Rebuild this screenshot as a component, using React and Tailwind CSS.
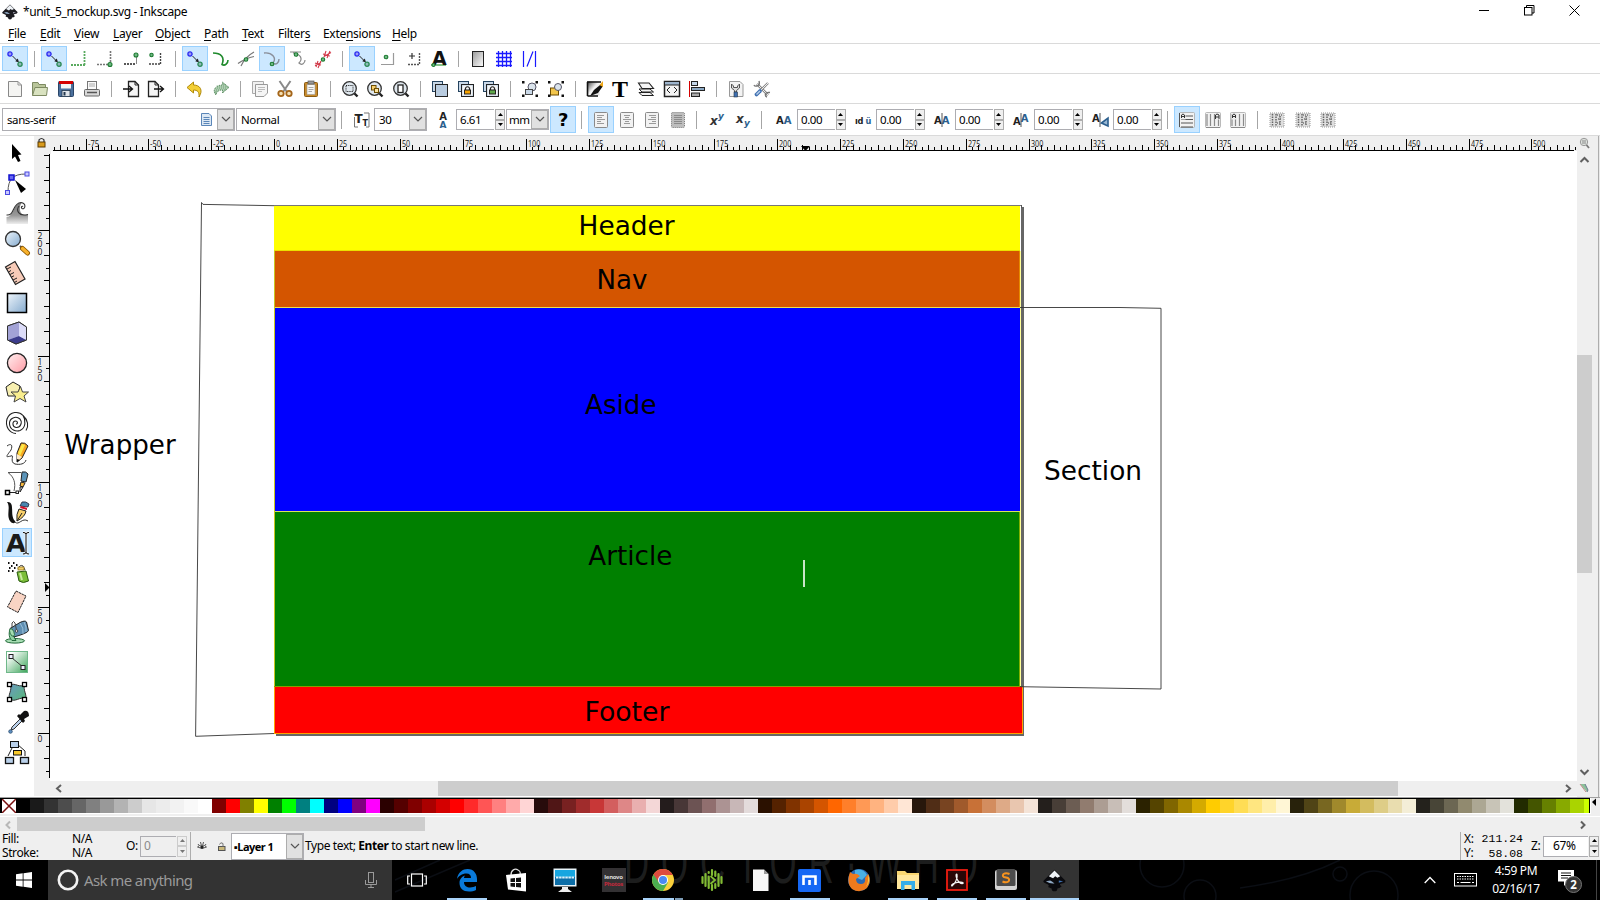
import React from "react";

/* ---------- shared helpers ---------- */

const Ic = ({ s = 24, className = "", children }) => (
  <svg width={s} height={s} viewBox={`${-s / 2} ${-s / 2} ${s} ${s}`} className={`shrink-0 overflow-visible ${className}`} fill="none" stroke="#222" strokeWidth="1">
    {children}
  </svg>
);

const Cell = ({ on, children }) => (
  <div className="flex w-[25.67px] shrink-0 items-center justify-center">
    {on ? (
      <div className="flex h-[25px] w-[26px] shrink-0 items-center justify-center border border-[#99d1ff] bg-[#cce8ff]">{children}</div>
    ) : (
      children
    )}
  </div>
);

const Sep = () => (
  <div className="flex w-[13.2px] shrink-0 items-center justify-center">
    <div className="h-4 w-px bg-[#a5a5a5]" />
  </div>
);

const Green = ({ x, y, r = 1.8 }) => <circle cx={x} cy={y} r={r} fill="#6fb884" stroke="#1c7a30" strokeWidth="1.1" />;

/* ---------- snap bar icons ---------- */

const SnapMain = () => (
  <Ic>
    <circle cx="-5" cy="-5" r="2.1" fill="#9a9af5" stroke="#2a2af0" strokeWidth="1.3" />
    <path d="M-2.5 -3 L2.5 2" />
    <path d="M4 3.6 L0.3 2.2 L2.8 -0.4 Z" fill="#222" stroke="none" />
    <circle cx="5" cy="5.2" r="2.1" fill="#8fb8b8" stroke="#2a8a55" strokeWidth="1.3" />
  </Ic>
);

const snapIcons = {
  main: <SnapMain />,
  edge: <Ic><path d="M5.5 -8 V6 M-8 6 H6" stroke="#5aab60" strokeWidth="1.8" strokeDasharray="2 1" /></Ic>,
  corner: <Ic><path d="M5.5 -8 V4 M-8 5.500 H3" stroke="#777" strokeDasharray="2 1" strokeWidth="1.6" /><Green x={5} y={5.5} r={2} /></Ic>,
  edgeMid: <Ic><path d="M5.500 -2 V5" stroke="#888" /><path d="M-7 5 H5" stroke="#222" strokeWidth="1.500" strokeDasharray="2 1" /><Green x={5} y={-4} r={2} /></Ic>,
  center: <Ic><path d="M4.500 -6 V5 M-7 5 H5" stroke="#444" strokeWidth="1.400" strokeDasharray="2 1" /><Green x={-4.500} y={-4} r={1.700} /></Ic>,
  path: <Ic><path d="M-8 -6 C0 -6 4 -2 1 5.500 C4 7.500 7 4 7 1" stroke="#1f8a2c" strokeWidth="1.600" /></Ic>,
  cross: <Ic><path d="M-8 4.500 Q0 -1 8 -2.500 M-5 7 Q-1 -2 8 -7" stroke="#777" strokeWidth="1.200" /><Green x={0} y={0.500} /></Ic>,
  cusp: <Ic><path d="M-8 -6 C0 -7 5 -1 1 4 C4 6.500 7 4 7 0" stroke="#8a8f9a" strokeWidth="1.400" /><Green x={0} y={5} /></Ic>,
  smooth: <Ic><path d="M-8 -7 H3 M-5 -6 C3 -5 5 0 1 4 C4 7 7 4 7 1" stroke="#888" strokeWidth="1.200" /><Green x={-2} y={-4.500} /></Ic>,
  mid: <Ic><path d="M-7 8 L-5 2 M-5 9 L-2 2 M-8 4 L-2 6 M1 -2 L3 -8 M4 -1 L7 -8 M0 -5 L7 -3 M-8 6.500 L-2 3.500 M1 -2.500 L8 -6.500" stroke="#d23a4a" strokeWidth="1.100" /><Green x={0} y={0.500} r={1.700} /></Ic>,
  objMid: <Ic><path d="M5.500 -6 V5.500 H-7" stroke="#9a9a9a" strokeWidth="1.200" /><Green x={-2} y={-2} /></Ic>,
  rot: <Ic><path d="M5.500 -6 V5.500 H-7" stroke="#555" strokeWidth="1.400" strokeDasharray="2 1" /><path d="M-5 -3 H1 M-2 -6 V0" stroke="#333" strokeWidth="1.200" /></Ic>,
  textA: <Ic><path d="M-8 6 H7" stroke="#5aab60" strokeWidth="1.500" /><text x="-7" y="6" className="font-['DejaVu_Sans'] text-[19px] font-bold" fill="#111" stroke="none">A</text><Green x={-5.500} y={6} r={1.500} /></Ic>,
  page: <Ic><defs><linearGradient id="pg" x1="0" x2="1" y1="0" y2="1"><stop offset="0" stopColor="#999" /><stop offset="1" stopColor="#fff" /></linearGradient></defs><rect x="-5.500" y="-7.500" width="11" height="15" fill="url(#pg)" stroke="#222" /></Ic>,
  grid: <Ic><path d="M-5.500 -8 V8 M-1.500 -8 V8 M2.500 -8 V8 M6.500 -8 V8 M-8 -5.500 H8 M-8 -1.500 H8 M-8 2.500 H8 M-8 6.500 H8" stroke="#1a1aff" strokeWidth="1.300" /></Ic>,
  guide: <Ic><path d="M-5.500 -8 V8 M6.500 -8 V8 M-2 7.500 L4 -7.500" stroke="#1a1aff" strokeWidth="1.200" /></Ic>,
};

const snapRow = ["*main", "|", "*main", "edge", "corner", "edgeMid", "center", "|", "*main", "path", "cross", "*cusp", "smooth", "mid", "|", "*main", "objMid", "rot", "textA", "|", "page", "grid", "guide"];

/* ---------- command bar icons ---------- */

const Lens = ({ children }) => (
  <Ic>
    <circle cx="-0.500" cy="-0.500" r="6.800" fill="#dfe7ee" stroke="#333" strokeWidth="1.300" />
    {children}
    <path d="M4.500 4.500 L7.500 7.500" strokeWidth="2.400" />
  </Ic>
);

const Stack = ({ lock }) => (
  <Ic>
    <rect x="-7.500" y="-7.500" width="10" height="10" fill="#c9d8e8" stroke="#24435f" />
    <rect x="-4.500" y="-4.500" width="12" height="12" fill="#b9cce0" stroke="#222" />
    {lock && (
      <g>
        <rect x="-3.500" y="-3.500" width="10" height="10" fill="#f6f6f6" stroke="none" />
        <path d="M-0.500 1 V-1 Q1.500 -3.500 3.500 -1 V1" stroke="#222" strokeWidth="1.200" />
        <rect x="-1.500" y="1" width="6" height="4" fill={lock} stroke="#222" />
      </g>
    )}
  </Ic>
);

const Handles = () => (
  <g fill="#111" stroke="none">
    <rect x="-8" y="-8" width="2.500" height="2.500" /><rect x="5.500" y="-8" width="2.500" height="2.500" />
    <rect x="-8" y="5.500" width="2.500" height="2.500" /><rect x="5.500" y="5.500" width="2.500" height="2.500" />
  </g>
);

const cmdIcons = {
  new: <Ic><path d="M-6.500 -7.500 H3 L6.500 -4 V7.500 H-6.500 Z" fill="#f4f4f2" stroke="#888" /><path d="M3 -7.500 V-4 H6.500" stroke="#999" /></Ic>,
  open: <Ic><path d="M-7.500 6.500 V-6.500 H-2 L-1 -4.500 H5.500 V-1" fill="#b9c59a" stroke="#7d8a62" /><path d="M-7.500 6.500 L-5 -1.500 H7.500 L6.500 6.500 Z" fill="#d9e2c0" stroke="#7d8a62" /></Ic>,
  save: <Ic><rect x="-7.500" y="-7.500" width="15" height="15" rx="1" fill="#4a6f9c" stroke="#2a4568" /><rect x="-5" y="-7" width="10" height="6.500" fill="#f4f4f4" stroke="none" /><rect x="-7" y="-8" width="14" height="3" fill="#d40000" stroke="none" /><rect x="-4" y="1.500" width="8" height="6" fill="#dfe4ea" stroke="#24384f" strokeWidth=".8" /><rect x="-2.500" y="3" width="2" height="3.500" fill="#24384f" stroke="none" /></Ic>,
  print: <Ic><rect x="-4.500" y="-7.500" width="9" height="8" fill="#fafafa" stroke="#777" /><path d="M-3 -5 H3 M-3 -3 H3" stroke="#aaa" /><rect x="-7.500" y="0.500" width="15" height="6.500" rx="1" fill="#d8d8d8" stroke="#666" /><path d="M-5 3.500 H5" stroke="#555" strokeWidth="1.500" /></Ic>,
  import: <Ic><path d="M-2.500 -7.500 H4 L7.500 -4 V7.500 H-2.500 Z" fill="#f4f4f4" strokeWidth="1.300" /><path d="M4 -7.500 V-4 H7.500" /><path d="M-8 0 H1 M-2 -3 L1.500 0 L-2 3" stroke="#111" strokeWidth="1.300" /></Ic>,
  export: <Ic><path d="M-7.500 -7.500 H-1 L2.500 -4 V7.500 H-7.500 Z" fill="#f4f4f4" strokeWidth="1.300" /><path d="M-1 -7.500 V-4 H2.500" /><path d="M-2 0 H7 M4 -3 L7.500 0 L4 3" stroke="#111" strokeWidth="1.300" /></Ic>,
  undo: <Ic><path d="M-8 -1.500 L-1.500 -7 V-4 C5 -4 8.500 1 4 8 C4.500 3 2.500 1 -1.500 1 V4 Z" fill="#f3cf35" stroke="#b08a0c" /></Ic>,
  redo: <Ic><path d="M8 -1.500 L1.500 -7 V-4 C-5 -4 -9.500 1 -5 6 C-4.500 3 -2.500 1 1.500 1 V4 Z" fill="#8fb894" stroke="#578a5e" strokeDasharray="1 1" /><path d="M-5 -1 H6 M-5 -3 H5 M-6 1 H4" stroke="#cfe2d0" strokeDasharray="1 1" /></Ic>,
  copy: <Ic><path d="M-7.500 -7.500 H3.500 V4.500 H-7.500 Z" fill="#f1f1f1" stroke="#aaa" /><path d="M-4.500 -4.500 H7.500 V4 L4 7.500 H-4.500 Z" fill="#f5f5f5" stroke="#999" /><path d="M-2 -1.500 H5 M-2 0.500 H5 M-2 2.500 H2" stroke="#bbb" /></Ic>,
  cut: <Ic><path d="M-5.500 -8 L2 3 M5.500 -8 L-2 3" stroke="#8a8a8a" strokeWidth="2" /><circle cx="-4" cy="4.500" r="2.700" fill="#f3dfb4" stroke="#a4651a" strokeWidth="1.800" /><circle cx="4" cy="4.500" r="2.700" fill="#f3dfb4" stroke="#a4651a" strokeWidth="1.800" /></Ic>,
  paste: <Ic><rect x="-6.500" y="-6.500" width="13" height="14" rx="1" fill="#c98b2a" stroke="#8a5a12" /><rect x="-4" y="-4.500" width="8" height="10" fill="#f7f7f4" stroke="#999" strokeWidth=".6" /><rect x="-3" y="-8" width="6" height="3" fill="#999" stroke="#555" strokeWidth=".7" /><path d="M-2.500 -1.500 H2.500 M-2.500 .5 H2.500 M-2.500 2.500 H1" stroke="#aaa" /></Ic>,
  zsel: <Lens><rect x="-4" y="-3.500" width="7" height="6" strokeDasharray="1.200 1" /></Lens>,
  zdraw: <Lens><rect x="-3.500" y="-3.500" width="4.500" height="4.500" fill="#f7cf6a" stroke="#6b4b00" /><rect x="-0.500" y="-0.500" width="4" height="4" fill="#fae3a0" stroke="#6b4b00" /></Lens>,
  zpage: <Lens><rect x="-3" y="-4" width="5" height="7.500" fill="#fff" strokeWidth="1.300" /></Lens>,
  dup: <Stack />,
  clone: <Stack lock="#f5a200" />,
  unclone: <Stack lock="#5fa84a" />,
  group: <Ic><circle cx="2" cy="-2" r="4" fill="#dbe4ec" stroke="#556" /><rect x="-4.500" y="0.500" width="7" height="5" fill="#c9d8e8" stroke="#444" /><Handles /></Ic>,
  ungroup: <Ic><rect x="-5.500" y="-1" width="8" height="7" fill="#f3c64c" stroke="#6b4b00" /><circle cx="2" cy="-2" r="3.500" fill="#dbe4ec" stroke="#556" /><Handles /></Ic>,
  fill: <Ic><defs><linearGradient id="fl" x1="0" x2="1" y1="0" y2="1"><stop offset="0" stopColor="#333" /><stop offset=".2" stopColor="#888" /><stop offset=".5" stopColor="#f4f4f4" /><stop offset="1" stopColor="#ddd" /></linearGradient></defs><rect x="-7.500" y="-7.500" width="12" height="14" fill="url(#fl)" stroke="none" /><path d="M-8 -7 H6 M-7.500 7 H3 M-7.500 -7 V7" stroke="#111" strokeWidth="1.600" /><path d="M7.500 -6 L-1 1 L-5 7 L3 4 L8 -3 Z" fill="#111" stroke="none" /><path d="M8 -8 L4.500 -4 L8 -2 Z" fill="#f0a818" stroke="none" /></Ic>,
  text: <Ic><text x="-8" y="7.500" className="font-['Liberation_Serif'] text-[23px] font-bold" textLength="16" lengthAdjust="spacingAndGlyphs" fill="#000" stroke="none">T</text></Ic>,
  layers: <Ic><path d="M-7 3.500 L-4 6.500 H7.500 L4 3.500 Z" fill="#f2f2f2" /><path d="M-7 0 L-4 3 H7.500 L4 0 Z" fill="#f2f2f2" /><path d="M-7.500 -6 H3 L7.500 -0.500 H-4 Z" fill="#f6f6f6" strokeWidth="1.100" /></Ic>,
  xml: <Ic><rect x="-7.500" y="-7.500" width="15" height="15" fill="#f4f4f4" strokeWidth="1.500" /><rect x="-7" y="-7" width="14" height="3" fill="#9db4cc" stroke="none" /><path d="M-7 -4 H7" /><path d="M-2 -2 L-5 1 L-2 4 M2 -2 L5 1 L2 4" /></Ic>,
  align: <Ic><path d="M-7.500 -8 V8" stroke="#d40000" /><rect x="-5.500" y="-7.500" width="6" height="4" fill="#c4d6e8" /><rect x="-5.500" y="-1.500" width="13" height="3" fill="#8aa8c4" /><rect x="-5.500" y="4" width="8" height="3.500" fill="#aaa" /></Ic>,
  prefs: <Ic><path d="M-6.500 -7.500 H4 L7 -4.500 V7.500 H-6.500 Z" fill="#f3f3f3" stroke="#999" /><path d="M-4.500 -5 V-1 L-1.500 1.500 V3 H.5 V1.500 L3.500 -1 V-5 L1.500 -3 V-1.500 H-2.500 V-3 Z" fill="#ddd" stroke="#555" /><rect x="-2" y="3" width="3.500" height="5" fill="#3f6fb0" stroke="#234" strokeWidth=".6" /></Ic>,
  tools: <Ic><path d="M-5 -5 L6 6" stroke="#888" strokeWidth="2.600" /><path d="M-5 -5 L6 6" stroke="#eee" strokeWidth="1" /><path d="M6 -6 L-1 1" stroke="#888" strokeWidth="2.400" /><path d="M6 -6 L-1 1" stroke="#eee" strokeWidth="1" /><path d="M-2 2 L-5.500 5.500" stroke="#3f6fb0" strokeWidth="3.800" strokeLinecap="round" /><path d="M-2 2 L-5.500 5.500" stroke="#b8cfea" strokeWidth="1.400" /><path d="M-3 -8 Q-2 -4 -4 -3.500 Q-7 -2 -8 -4 M8 3.500 Q4 3 3.500 5 Q3 7.500 5 8" stroke="#777" strokeWidth="1.400" /></Ic>,
};

const cmdRow = ["new", "open", "save", "print", "|", "import", "export", "|", "undo", "redo", "|", "copy", "cut", "paste", "|", "zsel", "zdraw", "zpage", "|", "dup", "clone", "unclone", "|", "group", "ungroup", "|", "fill", "text", "layers", "xml", "align", "|", "prefs", "tools"];

const IconRow = ({ items, icons }) =>
  items.map((n, i) =>
    n === "|" ? <Sep key={i} /> : <Cell key={i} on={n[0] === "*"}>{icons[n.replace("*", "")]}</Cell>
  );

/* ---------- text tool controls ---------- */

const Chevron = () => (
  <svg width="10" height="7" viewBox="0 0 10 7" fill="none" stroke="#555" strokeWidth="1.200"><path d="M1 1 L5 5 L9 1" /></svg>
);

const Combo = ({ className, children }) => (
  <div className={`flex shrink-0 border border-[#adadb2] bg-white ${className}`}>
    <div className="flex min-w-0 flex-1 items-center justify-between whitespace-nowrap">{children}</div>
    <div className="flex w-[17px] shrink-0 items-center justify-center border border-[#adadad] bg-[#e1e1e1]"><Chevron /></div>
  </div>
);

const Arrows = ({ dim }) => (
  <div className="flex h-[21px] w-[10px] shrink-0 flex-col">
    {["M1 4 L3.500 1 L6 4 Z", "M1 1 L3.500 4 L6 1 Z"].map((d) => (
      <div key={d} className={`flex flex-1 items-center justify-center border bg-[#efefef] ${dim ? "border-[#ccc]" : "border-[#adadad]"}`}>
        <svg width="7" height="5" fill={dim ? "#777" : "#000"}><path d={d} /></svg>
      </div>
    ))}
  </div>
);

const Spin = ({ className, children, dim }) => (
  <div className={`flex shrink-0 items-center gap-px ${className}`}>
    <div className={`flex h-[21px] flex-1 items-center border border-r-0 border-[#adadb2] pl-[3px] ${dim ? "bg-[#efefef] text-[#8a8a8a]" : "bg-white"}`}>{children}</div>
    <Arrows dim={dim} />
  </div>
);

const AlignIcon = ({ rows, dim }) => (
  <Ic>
    <rect x="-6.500" y="-7.500" width="13" height="15" rx="1" fill={dim ? "#bdbdbd" : "#f2f2f2"} stroke={dim ? "#777" : "#8a8a8a"} strokeDasharray={dim ? "1 1" : "none"} />
    {rows.map(([a, b], i) => <path key={i} d={`M${a} ${-4.500 + i * 2} H${b}`} stroke={dim ? "#8a8a8a" : "#9a9a9a"} />)}
  </Ic>
);

const FlowIcon = ({ v, right }) => (
  <Ic>
    <rect x="-7.500" y="-7.500" width="15" height="15" rx="1" fill="#f2f2f2" stroke="#aaa" strokeWidth=".8" />
    {v ? <path d="M-6 -6 V6 M-2.500 -6 V6 M1.500 -6 V6 M5.500 -6 V6 M-7 7.500 H7" stroke="#8a8a8a" strokeWidth="1.200" /> : <path d="M-2 -4 H6 M-6 -.5 H6 M-6 3 H6 M-6 7 H6 M-7.500 -7 V7" stroke="#555" strokeWidth="1" />}
    <rect x={right ? 2 : -6.500} y="-6.500" width="5" height="6" fill="#eee" stroke="none" />
    <path d={right ? "M2.500 -1 V-5 L4 -6 L6 -5 V-1 M2.500 -3 H6" : "M-5.500 -2 V-5 L-4 -6 L-2.500 -5 V-2 M-5 -3.500 H-2.500"} stroke="#333" strokeWidth="1" />
  </Ic>
);

const GrayIcon = () => (
  <Ic>
    <rect x="-7" y="-7" width="14" height="14" fill="#dedede" stroke="#999" strokeDasharray="1 1" />
    <path d="M-4.500 -6 V6 M-1 -6 V6 M3 -4 V6" stroke="#666" strokeWidth="1.500" strokeDasharray="1.500 1" />
    <path d="M0 -5 H6 M1 -1 H5 M0 3 H4" stroke="#777" strokeDasharray="1 1" strokeWidth="1.500" />
  </Ic>
);

const AA = "font-['DejaVu_Sans'] font-bold";

/* ---------- toolbox ---------- */

const tools = [
  ["select", <><path d="M-5 -9 V6 L-2 3.500 L1 9 L3.500 8 L1 2 L4.500 1.500 Z" fill="#000" stroke="none" /></>],
  ["node", <><path d="M-9 9 C-9 -4 -4 -9 9 -9" stroke="#555" /><rect x="-8" y="-8" width="5" height="5" fill="#6a6af0" stroke="#1010d0" strokeWidth="1.500" /><rect x="8" y="-11" width="4" height="4" fill="#c9c9ff" stroke="#4a4ae0" /><rect x="-11.500" y="7.500" width="4" height="4" fill="#c9c9ff" stroke="#4a4ae0" /><path d="M-2 -3 L9 6 L4 10 Z" fill="#000" stroke="none" /></>],
  ["tweak", <><path d="M-10.500 11 V4 C-3 4 -4 -10 5 -10.500 C2 -8 1 4 11 1.500 V11 Z" fill="url(#tw)" stroke="none" /><path d="M-10.500 2 C-2 3 -5 -10 4 -10.500 C10 -9.500 8 -3 5 -4.500 C3.500 -6 5 -7.500 6 -6.500 M2 -7 C-1 -3 1 4 11 1.500" stroke="#333" strokeWidth="1.100" /></>],
  ["zoom", <><path d="M3 3 L6 6" stroke="#555" strokeWidth="2" /><path d="M5.500 5.500 L10.500 10" stroke="#8a5600" strokeWidth="5" strokeLinecap="round" /><path d="M5.500 5.500 L10.500 10" stroke="#f7b12c" strokeWidth="3.200" strokeLinecap="round" /><circle cx="-4" cy="-4" r="7.500" fill="url(#bl)" stroke="#333" strokeWidth="1.300" /></>],
  ["measure", <><path d="M-11.500 -6 L-2 -11.500 L8 6 L-1.500 11.500 Z" fill="#f7cbb8" strokeWidth="1.200" /><path d="M-10 -4 L-6 -6 M-8.500 -1 L-6 -2.500 M-7 1.500 L-3 -.5 M-5.500 4 L-3 2.800 M-4 7 L0 5 M-2.500 9.500 L0 8" /></>],
  ["rect", <rect x="-9.500" y="-9.500" width="19" height="19" fill="url(#bl)" strokeWidth="1.500" stroke="#000" />],
  ["box", <><path d="M-9.500 -7 L2 -11 L9.500 -6 V7 L-1 11 L-9.500 7 Z" fill="#c9c9ee" stroke="#222" /><path d="M-9 -7 L2 -11 V3 L-9 7 Z" fill="#a3a3d6" stroke="none" /><path d="M2 3 L-9 7 L-1 11 L9 7 Z" fill="#3c3c8c" stroke="none" /><path d="M2 -10.500 L9 -6 V6.500 L2 3 Z" fill="#dcdcf8" stroke="none" /><path d="M-9.500 -7 L2 -11 L9.500 -6 V7 L-1 11 L-9.500 7 Z" stroke="#333" /></>],
  ["ellipse", <circle r="9.600" fill="url(#pk)" strokeWidth="1.300" />],
  ["star", <><path d="M-11 -6 L-4 -11 L3 -7 L1 3 L-9 3 Z" fill="#f7efb0" /><path d="M3.500 -6.500 L5.500 -1 L11.500 -1 L7 3 L9 9 L3 5.500 L-3 9 L-1.500 3 L-6 -1 H1 Z" fill="#f9ee8e" stroke="#444" /></>],
  ["spiral", <path d="M-1 1 C1 1 1 -2 -1.500 -2 C-5 -2 -5 4 -1 4.500 C4 5 5.500 -1 3 -4 C-1 -7.500 -8 -5 -7.500 1 C-7 7 -1 9 3 7.500 C9 5 9 -3 6 -7.500 C2 -12 -7 -12 -10 -4 C-12 3 -8 10 -1 10.500 M6 -7.500 C11 -3 12 3 9 7.500" stroke="#222" strokeWidth="1.100" />],
  ["pencil", <><path d="M-10 -7 C-6 -10 -4 -8 -6 -3 C-12 5 -11 4 -6 3 C-2 1 -8 9 -2 11 C3 12 8 11 9 7" stroke="#333" /><path d="M0 0 L4 -10 Q8 -11 11 -7 L5 5 L0 9 Z" fill="#f7a822" stroke="#222" /><path d="M1 0 L5 -9 L8 -8 L3 3 Z" fill="#fbe94a" stroke="none" /><path d="M0 1 L5 4 L0 9 Z" fill="#fbe9c8" stroke="none" /><path d="M0 6 L3 7 L0 9.500 Z" fill="#111" stroke="none" /></>],
  ["bezier", <><path d="M-9 -10.500 H4 M-9 -10.500 C-3 -6 -1 0 -3 8" stroke="#555" /><path d="M-9 9.500 H-1" /><rect x="-11.500" y="7.500" width="4" height="4" fill="#fff" strokeWidth="1.500" stroke="#000" /><rect x="-1" y="8" width="2.500" height="2.500" fill="#fff" /><path d="M5 -11 Q9 -12 11 -9 L9 -1 L4 -2 Z" fill="#5a93b8" stroke="#222" /><path d="M4 -1 L8 0 L6 4 L3 3 Z" fill="#f7b83c" /><path d="M3 4 L6 4 L3 9 Z" fill="#ddd" /></>],
  ["calli", <><path d="M-10 -11 C-1 -12 -8 2 -2 8 C-1 11 -5 11 -7 8 C-11 2 -6 -6 -10 -11 Z" fill="#111" stroke="none" /><path d="M-2 9 C2 13 5 4 11 8" stroke="#333" /><path d="M5 -11 Q9 -12 12 -9 L11 -6 L3 -7 Z" fill="#4a86b0" stroke="#223" strokeWidth=".8" /><path d="M4 -7 L10 -5 V-3 L3 -5 Z" fill="#d4102a" stroke="none" /><path d="M2 -4 L9 -2 Q8 4 0 8 Q-1 1 2 -4 Z" fill="#f7cf6a" /><path d="M0 8 L5 0" stroke="#222" /></>],
  ["text", <><text x="-11" y="9" className="font-['DejaVu_Sans'] text-[25px] font-bold" textLength="20" lengthAdjust="spacingAndGlyphs" fill="#1a1a1a" stroke="none">A</text><path d="M9 -9 V10 M6 -10.500 Q9 -10.500 9 -9 Q9 -10.500 12 -10.500 M6 11 Q9 11 9 9.500 Q9 11 12 11" stroke="#fff" strokeWidth="2.500" /><path d="M9 -9 V10 M6 -10.500 Q9 -10.500 9 -9 Q9 -10.500 12 -10.500 M6 11 Q9 11 9 9.500 Q9 11 12 11" stroke="#000" strokeWidth="1" /></>],
  ["spray", <><path d="M-9 -9 h1.500 M-6 -6 h1.500 M-8 -4 h1.500 M-4 -9 h1.500 M-3 -4 h1.500 M-9 -1 h1.500 M-5 -1 h1.500 M-1 -7 h1.500" stroke="#111" strokeWidth="1.800" /><path d="M1 -3 Q3 -8 6 -6 L8 -2" fill="#eee" stroke="#333" /><rect x="1" y="-5" width="6" height="3" fill="#f3cf6a" stroke="#8a6a10" strokeWidth=".7" /><path d="M0 0 L9 -1 L11.500 9 Q6 12 2 9 Z" fill="#7cbf3a" stroke="#2a5a10" /><path d="M3 1 L5 8" stroke="#c9eaa0" strokeWidth="2" /></>],
  ["eraser", <path d="M-1 -11 L9 -6 L1 10.500 L-9.500 5 Z" fill="#f9d4c4" stroke="#222" strokeDasharray="2.500 .6" />],
  ["bucket", <><ellipse cx="-2" cy="8.800" rx="9.500" ry="2.300" fill="#a6dcb2" stroke="#226a3a" /><path d="M-7 -3 C-8.500 2 -8 6 -5 8.500 H-1 C-4 4 -3 3 -2 3" fill="#8fd0a0" stroke="#226a3a" /><path d="M-7 -3.500 L3 -9.500 Q8 -12 9.500 -10 L11.500 -1.500 Q11 1 -3 5 Z" fill="#5f8fb2" stroke="#222" /><path d="M3 -9 Q7 -4 6 2 M7 -10 Q10 -5 9 0" stroke="#9cc0da" /><ellipse cx="-5" cy="0.500" rx="2" ry="4" transform="rotate(-22 -5 .5)" fill="#a6dcb2" stroke="#226a3a" strokeWidth=".8" /><path d="M-5 -4 V-9 Q-3.500 -12 -2 -9 L-0.500 -2" stroke="#444" /><circle cx="-0.500" cy="-1" r="1.300" fill="#eee" stroke="#444" /></>],
  ["gradient", <><rect x="-10.500" y="-10.500" width="21" height="21" fill="url(#gr)" stroke="#6fb88a" /><path d="M-5 -4 L6 5" stroke="#333" /><rect x="-8" y="-7.500" width="4" height="4" fill="#eef" /><rect x="4" y="3.500" width="4" height="4" fill="#eef" /></>],
  ["mesh", <><path d="M-7 -7 C-2 -10 3 -3 8 -8 C5 -2 11 3 8 7 C3 4 -2 11 -7 7 C-10 3 -4 -2 -7 -7 Z" fill="url(#ms)" stroke="#333" />{[[-9.5, -9.5], [5.5, -9.5], [-9.5, 5.5], [5.5, 5.5]].map(([x, y]) => <rect key={`${x}${y}`} x={x} y={y} width="4" height="4" fill="#fff" stroke="#000" strokeWidth="1.300" />)}</>],
  ["dropper", <><path d="M4 -4 L-5 5 L-6 8 L-3 7 L6 -2" fill="#b9d0ea" stroke="#333" /><path d="M0 -6 L6 1 L8 -1 L7 -3 L12 -6 Q12 -12 7 -11 L3 -7 L2 -8 Z" fill="#111" stroke="none" /><circle cx="-6.500" cy="9.500" r="1.800" fill="#5f8fc0" stroke="#246" strokeWidth=".7" /></>],
  ["connector", <><path d="M-5 -4 L-9 4 M0 -8 L8 -1 V4" /><rect x="-6.500" y="-10.500" width="8" height="6" fill="#b9d0ea" stroke="#111" /><rect x="-3.500" y="-1.500" width="8" height="4.500" fill="#f7c82c" stroke="#111" /><rect x="-11.500" y="5.500" width="8" height="6" fill="#b9d0ea" stroke="#111" strokeWidth="1.300" /><rect x="3.500" y="5.500" width="8" height="6" fill="#b9d0ea" stroke="#111" strokeWidth="1.300" /></>],
];

const Defs = () => (
  <svg width="0" height="0" className="absolute">
    <defs>
      <linearGradient id="bl" x1="0" y1="0" x2="1" y2="1"><stop offset="0" stopColor="#eef5fb" /><stop offset="1" stopColor="#84aace" /></linearGradient>
      <linearGradient id="pk" x1="0" y1="0" x2="1" y2="1"><stop offset="0" stopColor="#fff0f0" /><stop offset="1" stopColor="#ff9aa4" /></linearGradient>
      <linearGradient id="tw" x1="0" y1="0" x2="0" y2="1"><stop offset="0" stopColor="#777" /><stop offset=".6" stopColor="#999" /><stop offset="1" stopColor="#eee" /></linearGradient>
      <linearGradient id="gr" x1="0" y1="0" x2="1" y2="1"><stop offset="0.150" stopColor="#fff" /><stop offset="1" stopColor="#3aa458" /></linearGradient>
      <linearGradient id="ms" x1="0" y1="0" x2="1" y2="1"><stop offset="0" stopColor="#6a9ac0" /><stop offset="1" stopColor="#58b878" /></linearGradient>
    </defs>
  </svg>
);

/* ---------- rulers ---------- */

const HRuler = () => {
  const ticks = [];
  for (let i = -35; i <= 207; i++) {
    const x = Math.round(274.2 + i * 6.286) - 34;
    if (x < 19 || x > 1542) continue;
    ticks.push([x, i]);
  }
  return (
    <svg width="1543" height="18" className="shrink-0 bg-[#efefef]">
      <rect x="17" y="15" width="1526" height="3" fill="#fff" />
      {ticks.map(([x, i]) => (
        <rect key={i} x={x} y={i % 10 === 0 ? 3 : i % 2 === 0 ? 9 : 11} width="1" height={i % 10 === 0 ? 11 : i % 2 === 0 ? 5 : 3} fill="#000" />
      ))}
      {ticks.filter(([, i]) => i % 10 === 0).map(([x, i]) => {
        const t = String(i * 2.5);
        return <text key={t} x={x + 2} y="11" textLength={t.replace("-", "").length * 4.1 + (t[0] === "-" ? 3 : 0)} lengthAdjust="spacingAndGlyphs" className="font-['Open_Sans'] text-[9px]" fill="#111">{t}</text>;
      })}
      <rect x="19" y="14" width="1521" height="1" fill="#000" />
      <path d="M767 10 H776 L771.500 15 Z" fill="#000" />
      <rect x="4" y="6" width="7" height="5" fill="#d89a1c" stroke="#5a3a00" />
      <path d="M5 6 V4 Q7.500 1 10 4 V6" fill="none" stroke="#333" strokeWidth="1.200" />
    </svg>
  );
};

const VRuler = () => {
  const ticks = [];
  for (let i = -3; i <= 46; i++) ticks.push([Math.round(733 - i * 12.57) - 154, i]);
  return (
    <svg width="17" height="642" className="shrink-0 bg-[#efefef]">
      {ticks.map(([y, i]) => (
        <rect key={i} x={i % 10 === 0 ? 4 : i % 2 === 0 ? 10 : 12} y={y} width={i % 10 === 0 ? 11 : i % 2 === 0 ? 5 : 3} height="1" fill="#000" />
      ))}
      {ticks.filter(([, i]) => i % 10 === 0).map(([y, i]) =>
        String(i * 5).split("").map((c, k) => (
          <text key={`${i}-${k}`} x="3.500" y={y + 8.500 + k * 8} className="font-['Open_Sans'] text-[8.500px]" fill="#111">{c}</text>
        ))
      )}
      <rect x="15" y="0" width="1" height="624" fill="#000" />
      <path d="M11 429 V438 L15.500 433.500 Z" fill="#000" />
      <rect x="16" y="0" width="1" height="627" fill="#fff" />
    </svg>
  );
};

/* ---------- drawing ---------- */

const labels = [
  ["Wrapper", 64.2, 454, 111.5],
  ["Header", 578.6, 235.2, 96],
  ["Nav", 596.4, 289.2, 51],
  ["Aside", 585, 413.7, 71.5],
  ["Article", 588.3, 564.7, 84],
  ["Footer", 584.5, 720.5, 85],
  ["Section", 1044, 480, 98],
];

const Drawing = () => (
  <svg width="1526" height="627" viewBox="51 154 1526 627" className="shrink-0 bg-white">
    <rect x="276" y="734" width="748" height="2" fill="#666" />
    <rect x="1021" y="207" width="3" height="529" fill="#666" />
    <rect x="274" y="205" width="748" height="1" fill="#777" />
    <rect x="1021" y="205" width="1" height="3" fill="#555" />
    <rect x="274" y="206" width="747" height="528" fill="#fff" />
    <rect x="1020" y="251" width="1" height="436" fill="#ffff9a" />
    <rect x="274" y="206" width="746" height="45" fill="#ff0" />
    <rect x="274" y="250.500" width="746" height=".5" fill="#d9c000" />
    <rect x="274" y="251" width="746" height="56" fill="#d45500" />
    <rect x="1019" y="251" width="1" height="56" fill="#e58a00" />
    <rect x="274" y="307" width="746" height="1" fill="#e8e050" />
    <rect x="274" y="308" width="746" height="203" fill="#00f" />
    <rect x="274" y="511" width="746" height="1" fill="#d8e060" />
    <rect x="274" y="512" width="746" height="174" fill="#008000" />
    <rect x="1019" y="512" width="1" height="174" fill="#7fb000" />
    <rect x="274" y="251" width="1" height="435" fill="#c8c820" />
    <rect x="274" y="686" width="748" height="1" fill="#8a9c00" />
    <rect x="274" y="687" width="749" height="47" fill="#ffa000" />
    <rect x="275" y="687" width="747" height="46" fill="#f00" />
    <path d="M274 205.700 L203 204.400 L201.500 202.500 L195.600 736.300 L274 733.500" fill="none" stroke="#333" strokeWidth=".9" />
    <path d="M1020 307.500 H1120 L1161 308.300 V689 L1020 686.700" fill="none" stroke="#333" strokeWidth=".9" />
    {labels.map(([t, x, y, w]) => (
      <text key={t} x={x} y={y} textLength={w} lengthAdjust="spacingAndGlyphs" className="font-['DejaVu_Sans',sans-serif] text-[26.500px]" fill="#000">{t}</text>
    ))}
    <rect x="803" y="560" width="2" height="27" fill="#c8e4c8" />
  </svg>
);

/* ---------- palette ---------- */

const palette = (
  "000000 1a1a1a 333333 4d4d4d 666666 808080 999999 b3b3b3 cccccc e6e6e6 ececec f2f2f2 f9f9f9 ffffff " +
  "800000 ff0000 808000 ffff00 008000 00ff00 008080 00ffff 000080 0000ff 800080 ff00ff " +
  "2b0000 550000 800000 aa0000 d40000 ff0000 ff2a2a ff5555 ff8080 ffaaaa ffd5d5 " +
  "280b0b 501616 782121 a02c2c c83737 d35f5f de8787 e9afaf f4d7d7 241c1c 483737 6c5353 916f6f ac9393 c8b7b7 e3dbdb " +
  "2b1100 552200 803300 aa4400 d45500 ff6600 ff7f2a ff9955 ffb380 ffccaa ffe6d5 " +
  "28170b 502d16 784421 a05a2c c87137 d38d5f deaa87 e9c6af f4e3d7 241f1c 483e37 6c5d53 917c6f ac9d93 c8beb7 e3dedb " +
  "2b2200 554400 806600 aa8800 d4aa00 ffcc00 ffd42a ffdd55 ffe680 ffeeaa fff6d5 " +
  "28220b 504416 786721 a0892c c8ab37 d3bc5f decd87 e9ddaf f4eed7 24221c 484537 6c6753 918a6f aca793 c8c4b7 e3e2db " +
  "222b00 445500 668000 88aa00 aad400 ccff00"
).split(" ");

/* ---------- taskbar ---------- */

const TaskCell = ({ line, active, wide, children }) => (
  <div className={`flex h-10 shrink-0 flex-col items-center ${wide ? "w-[49px]" : "w-[49px]"} ${active ? "bg-[#333]" : ""}`}>
    <div className="flex flex-1 items-center pt-0.5">{children}</div>
    <div className={`flex h-0.5 justify-end ${active ? "w-full" : "w-10"} ${line ? "bg-[#a9d3f9]" : ""}`}>
      {line === "multi" && <div className="h-0.5 w-[9px] border-l border-black bg-[#7e9db8]" />}
    </div>
  </div>
);

const InkLogo = ({ s = 16, dark }) => (
  <svg width={s} height={s} viewBox="0 0 16 16">
    <path d="M8 0.500 L15.500 8 Q16 10 13 10 Q10.500 10.500 13 12 Q12 13.500 10 13.500 Q10 15.500 8 15.500 Q6 15.500 6 13.500 L3.500 12.500 Q5 11 2 10 Q-.5 9.500 .5 8 Z" fill={dark ? "#0a0a0e" : "#1b1b20"} />
    <path d="M8 1 L12 5 L10 6 L8.500 5 L7 6.500 L4 5 Z" fill="#eef2f6" />
    <path d="M2 8.500 Q5 10.500 8 10 Q6 8.500 5 8 Z" fill="#8fa8c4" />
    <path d="M11 8 L14 8.500 L11 9.500 Z" fill={dark ? "#3f72b4" : "#99a"} />
  </svg>
);

const Chrome = () => (
  <svg width="24" height="24" viewBox="-12 -12 24 24">
    <circle r="11" fill="#fbd03b" />
    <path d="M0 0 L-9.500 -5.500 A11 11 0 0 0 0 11 L5 2.500 Z" fill="#4caf50" />
    <path d="M0 -11 A11 11 0 0 1 9.800 -5 H0 L-4 2.500 L-9.500 -5.500 A11 11 0 0 1 0 -11 Z" fill="#dd4b3e" />
    <circle r="5" fill="#fff" /><circle r="4" fill="#4a8af4" />
  </svg>
);

const Wallpaper = () => (
  <svg width="1600" height="40" className="absolute left-0 top-0">
    <text transform="translate(624 23) scale(.58 1)" textLength="610" className="font-['Liberation_Sans'] text-[60px]" fill="#1c1d1d">DOCTOR·WHO</text>
    <g fill="none" stroke="#0b0e14" strokeWidth="1.500">
      <circle cx="1162" cy="5" r="22" /><circle cx="1200" cy="36" r="16" /><circle cx="1374" cy="35" r="24" /><circle cx="1340" cy="14" r="7" />
      <path d="M395 20 L440 0 M395 32 L470 0 M1240 28 Q1300 20 1340 0" />
    </g>
  </svg>
);

export default function App() {
  const menus = [["", "F", "ile", "w-8"], ["", "E", "dit", "w-[34px]"], ["", "V", "iew", "w-[39px]"], ["", "L", "ayer", "w-[42px]"], ["", "O", "bject", "w-[49px]"], ["", "P", "ath", "w-[38px]"], ["", "T", "ext", "w-9"], ["Filter", "s", "", "w-[45px]"], ["Exte", "n", "sions", "w-[69px]"], ["", "H", "elp", "w-10"]];
  return (
    <div className="flex h-[900px] w-[1600px] flex-col overflow-hidden bg-white font-['Noto_Sans','Open_Sans',sans-serif] text-[12px] leading-none text-black">
      <Defs />

      {/* title bar */}
      <div className="flex h-6 shrink-0 items-center pl-[2px]">
        <InkLogo />
        <span className="ml-[5px] tracking-[-0.360px]">*unit_5_mockup.svg - Inkscape</span>
        <div className="ml-auto flex h-full items-start gap-[34px] pr-[20px] pt-[5px]">
          <svg width="11" height="11"><path d="M0 5.500 H10" stroke="#000" /></svg>
          <svg width="11" height="11" fill="none" stroke="#000"><rect x=".5" y="2.500" width="7.500" height="7.500" /><path d="M2.500 2.500 V.5 H10 V8 H8" /></svg>
          <svg width="11" height="11" stroke="#000"><path d="M.5 .5 L10.500 10.500 M10.500 .5 L.5 10.500" /></svg>
        </div>
      </div>

      {/* menu bar */}
      <div className="flex h-5 shrink-0 items-center border-b border-[#dadada] pl-2 tracking-[-0.300px]">
        {menus.map(([a, u, b, w]) => (
          <span key={a + u + b} className={`shrink-0 whitespace-nowrap ${w}`}>{a}<span className="underline underline-offset-2">{u}</span>{b}</span>
        ))}
      </div>

      {/* snap bar */}
      <div className="flex h-[30px] shrink-0 items-center border-b border-[#dadada] pl-[2px]"><IconRow items={snapRow} icons={snapIcons} /></div>

      {/* command bar */}
      <div className="flex h-[30px] shrink-0 items-center border-b border-[#dadada] pl-[2px]"><IconRow items={cmdRow} icons={cmdIcons} /></div>

      {/* text tool bar */}
      <div className="flex h-8 shrink-0 items-center border-b border-[#dadada] pl-[2px] text-[11.500px] tracking-[-0.400px]">
        <Combo className="h-[23px] w-[233px]">
          <span className="pl-1">sans-serif</span>
          <svg width="11" height="13" className="mr-[5px]" fill="none" stroke="#5a86b8"><path d="M.5 .5 H8 L10.500 3 V12.500 H.5 Z" fill="#dce8f4" /><path d="M2.500 4.500 H8.500 M2.500 6.500 H8.500 M2.500 8.500 H8.500 M2.500 10.500 H8.500" /></svg>
        </Combo>
        <Combo className="ml-px h-[23px] w-[100px]"><span className="pl-1">Normal</span></Combo>
        <div className="ml-[5px] h-[18px] w-px shrink-0 bg-[#a5a5a5]" />
        <Ic className="ml-[8px]">
          <path d="M-7.500 -3 V7 H-4 M2 -7 H7 V7 H4" stroke="#777" />
          <text x="-7.500" y="2.500" className={`${AA} text-[12px]`} fill="#222" stroke="none">T</text>
          <text x="0.500" y="6" className={`${AA} text-[8px]`} fill="#222" stroke="none">T</text>
        </Ic>
        <Combo className="h-[23px] w-[53px]"><span className="pl-1">30</span></Combo>
        <Ic className="ml-[4px]">
          <text x="-3.800" y="-0.500" className={`${AA} text-[10px]`} fill="#222" stroke="none">A</text>
          <text x="-3.400" y="7.500" className={`${AA} text-[9px]`} fill="#2c5f8e" stroke="none">A</text>
        </Ic>
        <Spin className="ml-px w-[49px]">6.61</Spin>
        <Combo className="ml-[1px] h-[21px] w-[43px]"><span className="pl-[2px]">mm</span></Combo>
        <div className="ml-px flex h-[27px] w-[26px] shrink-0 items-center justify-center border border-[#99d1ff] bg-[#cce8ff]">
          <span className="font-['DejaVu_Sans'] text-[18px] font-bold">?</span>
        </div>
        <div className="ml-[5px] h-[18px] w-px shrink-0 bg-[#a5a5a5]" />
        <div className="ml-[6px] flex h-[27px] w-[26px] shrink-0 items-center justify-center border border-[#99d1ff] bg-[#cce8ff]">
          <AlignIcon rows={[[-4, 3], [-4, 1], [-4, 4], [-4, 0], [-4, 3]]} />
        </div>
        <Cell><AlignIcon rows={[[-3, 3], [-2, 2], [-4, 4], [-2, 2], [-3, 3]]} /></Cell>
        <Cell><AlignIcon rows={[[-3, 4], [-1, 4], [-4, 4], [0, 4], [-3, 4]]} /></Cell>
        <Cell><AlignIcon dim rows={[[-4, 4], [-4, 4], [-4, 4], [-4, 4], [-4, 4]]} /></Cell>
        <div className="ml-[5px] h-[18px] w-px shrink-0 bg-[#a5a5a5]" />
        <Ic className="ml-[8px]">
          <text x="-7" y="5" className={`${AA} text-[12px] italic`} fill="#333" stroke="none">x</text>
          <text x="1" y="-1" className={`${AA} text-[9px] italic`} fill="#2c5f8e" stroke="none">y</text>
        </Ic>
        <Ic className="ml-[2px]">
          <text x="-7" y="3" className={`${AA} text-[12px] italic`} fill="#333" stroke="none">x</text>
          <text x="1" y="5.500" className={`${AA} text-[9px] italic`} fill="#2c5f8e" stroke="none">y</text>
        </Ic>
        <div className="ml-[6px] h-[18px] w-px shrink-0 bg-[#a5a5a5]" />
        <Ic className="ml-[10px]">
          <text x="-8" y="3.500" className={`${AA} text-[10px] tracking-normal`} fill="#222" stroke="none">A<tspan fill="#2c5f8e">A</tspan></text>
        </Ic>
        <Spin className="ml-[1px] w-[49px]">0.00</Spin>
        <Ic className="ml-[5px]">
          <text x="-8" y="3.500" className={`${AA} text-[9px]`} textLength="8" lengthAdjust="spacingAndGlyphs" fill="#222" stroke="none">ıd</text>
          <text x="2.500" y="3.500" className={`${AA} text-[9px]`} textLength="5.500" lengthAdjust="spacingAndGlyphs" fill="#2c5f8e" stroke="none">ü</text>
        </Ic>
        <Spin className="ml-[1px] w-[49px]">0.00</Spin>
        <Ic className="ml-[5px]">
          <text x="-8" y="4" className={`${AA} text-[10px] tracking-normal`} fill="#222" stroke="none">A<tspan fill="#2c5f8e">A</tspan></text>
          <path d="M0 -7 V7" stroke="#555" />
        </Ic>
        <Spin className="ml-[1px] w-[49px]">0.00</Spin>
        <Ic className="ml-[5px]">
          <text x="-8" y="5" className={`${AA} text-[10px] tracking-normal`} fill="#222" stroke="none">A<tspan dy="-3" fill="#2c5f8e">A</tspan></text>
          <path d="M0 -7 V7" stroke="#555" />
        </Ic>
        <Spin className="ml-[1px] w-[49px]">0.00</Spin>
        <Ic className="ml-[5px]">
          <text x="-8" y="2" className={`${AA} text-[10px]`} fill="#222" stroke="none">A</text>
          <path d="M0 -7 V7" stroke="#555" />
          <path d="M1.500 3 L8 -2 V6 Z" fill="#9ab8d4" stroke="#2c5f8e" strokeWidth="1.600" />
        </Ic>
        <Spin className="ml-[1px] w-[49px]">0.00</Spin>
        <div className="ml-[5px] h-[18px] w-px shrink-0 bg-[#a5a5a5]" />
        <div className="ml-[6px] flex h-[27px] w-[26px] shrink-0 items-center justify-center border border-[#99d1ff] bg-[#cce8ff]"><FlowIcon /></div>
        <Cell><FlowIcon v right /></Cell>
        <Cell><FlowIcon v /></Cell>
        <div className="ml-[6px] h-[18px] w-px shrink-0 bg-[#a5a5a5]" />
        <div className="ml-[6px] flex"><Cell><GrayIcon /></Cell><Cell><GrayIcon /></Cell><Cell><GrayIcon /></Cell></div>
      </div>

      {/* workspace */}
      <div className="flex h-[661px] shrink-0">
        <div className="flex w-[34px] shrink-0 flex-col items-center pt-[2px]">
          {tools.map(([name, art]) => (
            <div key={name} className={`flex w-[30px] shrink-0 items-center justify-center ${name === "text" ? "h-[29px] border border-[#99d1ff] bg-[#cce8ff]" : "h-[30px]"}`}>
              <Ic s={26}>{art}</Ic>
            </div>
          ))}
        </div>
        <div className="flex w-[1543px] shrink-0 flex-col">
          <HRuler />
          <div className="flex h-[642px]">
            <VRuler />
            <div className="flex w-[1526px] flex-col">
              <Drawing />
              <div className="flex h-[15px] items-center bg-[#efefef]">
                <svg width="387" height="15" fill="none" stroke="#606060" strokeWidth="2"><path d="M10 4 L6 7.500 L10 11" /></svg>
                <div className="h-full w-[960px] bg-[#cdcdcd]" />
                <svg width="179" height="15" fill="none" stroke="#606060" strokeWidth="2"><path d="M168 4 L172 7.500 L168 11" /></svg>
              </div>
            </div>
          </div>
        </div>
        <div className="flex w-[23px] shrink-0 flex-col border-r border-[#e8e8e8] bg-[#efefef]">
          <div className="flex h-full flex-col border-r border-[#adadad]">
            <svg width="15" height="219" fill="none">
              <circle cx="7" cy="6" r="3.700" fill="#dce0dc" stroke="#999" /><path d="M6 4 V8 M8 4 V8" stroke="#8a8a8a" /><path d="M9.500 9 L12 12" stroke="#777" strokeWidth="1.800" />
              <path d="M3.500 26 L7.500 22 L11.500 26" stroke="#606060" strokeWidth="2" />
            </svg>
            <div className="h-[218px] w-[15px] shrink-0 bg-[#cdcdcd]" />
            <svg width="21" height="223" fill="none">
              <path d="M3.500 197 L7.500 201 L11.500 197" stroke="#606060" strokeWidth="2" />
              <path d="M3 211 L8 211 L11 217 L10 219 Z" fill="#8cc09a" /><path d="M3 211 L9 219" stroke="#c08a8a" /><path d="M8 211 L11 217 L10 219" stroke="#6a7a90" />
            </svg>
          </div>
        </div>
      </div>

      {/* palette */}
      <div className="flex h-[19px] shrink-0 border-t border-[#a0a0a0] bg-[#efefef]">
        <div className="flex h-[16px] w-[1591px] shrink-0 border-b border-r border-white bg-black pl-[2px] pt-px">
          <svg width="14" height="14" className="shrink-0 bg-white"><path d="M0 0 L14 14 M14 0 L0 14" stroke="#7a1010" strokeWidth="1.500" /></svg>
          <div className="flex h-[14px] w-[1573px] overflow-hidden">
            {palette.map((c, i) => <div key={i} className="h-[14px] w-[14px] shrink-0" style={{ backgroundColor: `#${c}` }} />)}
          </div>
        </div>
        <svg width="8" height="12"><path d="M5 0.500 V8 L1 4 Z" fill="#000" /></svg>
      </div>
      <div className="flex h-4 shrink-0 border-t border-white bg-[#efefef]">
        <svg width="17" height="15" fill="none" stroke="#b8b8b8" strokeWidth="2"><path d="M10 4.500 L6.500 8 L10 11.500" /></svg>
        <div className="h-[14px] w-[408px] bg-[#cdcdcd]" />
        <svg width="20" height="15" fill="none" stroke="#606060" strokeWidth="2" className="ml-auto mr-[7px]"><path d="M8 4.500 L11.500 8 L8 11.500" /></svg>
      </div>

      {/* status bar */}
      <div className="flex h-[28px] shrink-0 items-center bg-[#efefef] pl-[2px] tracking-[-0.400px]">
        <div className="flex w-[70px] flex-col gap-[2px]"><span>Fill:</span><span>Stroke:</span></div>
        <div className="flex w-[54px] flex-col gap-[2px]"><span>N/A</span><span>N/A</span></div>
        <span className="w-[14px]">O:</span>
        <Spin dim className="w-[47px]">0</Spin>
        <div className="ml-[3px] h-7 w-px bg-[#adadad]" />
        <Ic s={20} className="ml-px"><path d="M-4.500 1 Q0 -3.500 4.500 1 Q0 4 -4.500 1 Z" fill="#eee" stroke="#555" /><circle cy="1" r="1.700" fill="#222" stroke="none" /><path d="M-4 -2 L-3 -.5 M-1.500 -4 L-1 -2 M1.500 -4 L1 -2 M4 -2 L3 -.5" stroke="#555" /></Ic>
        <Ic s={19}><rect x="-3" y="0" width="6.500" height="4" fill="#c9b87a" stroke="#555" /><path d="M-2 -2 Q-1 -5 1.500 -3 V0" stroke="#777" /></Ic>
        <Combo className="h-[27px] w-[73px]"><span className="pl-[2px] text-[11px] font-bold tracking-[-0.550px]">▪Layer 1</span></Combo>
        <span className="ml-px whitespace-nowrap">Type text; <b>Enter</b> to start new line.</span>
        <div className="ml-auto h-7 w-px bg-[#adadad]" />
        <div className="ml-[3px] flex w-[12px] flex-col gap-[2px]"><span>X:</span><span>Y:</span></div>
        <div className="flex w-[47px] flex-col items-end gap-[3px] font-['Liberation_Mono'] text-[11.500px] tracking-[0px]"><span>211.24</span><span>58.08</span></div>
        <span className="ml-[8px] w-[12px]">Z:</span>
        <Spin className="w-[57px] pr-px"><span className="pl-[6px]">67%</span></Spin>
      </div>

      {/* taskbar */}
      <div className="relative flex h-10 shrink-0 overflow-hidden bg-black">
        <Wallpaper />
        <div className="relative flex w-full">
          <div className="flex w-12 shrink-0 items-center pl-4">
            <svg width="16" height="16" fill="#fff"><path d="M0 2.300 L6.700 1.300 V7.500 H0 Z M7.500 1.200 L16 0 V7.500 H7.500 Z M0 8.400 H6.700 V14.700 L0 13.700 Z M7.500 8.400 H16 V16 L7.500 14.800 Z" /></svg>
          </div>
          <div className="flex w-[344px] shrink-0 items-center bg-[#333] pl-[9px] pr-[14px]">
            <svg width="22" height="22"><circle cx="11" cy="11" r="9.200" fill="none" stroke="#f2f2f2" strokeWidth="2.600" /></svg>
            <span className="ml-[5px] text-[15px] leading-5 tracking-[-0.600px] text-[#9a9a9a]">Ask me anything</span>
            <svg width="14" height="18" className="ml-auto" fill="none" stroke="#9a9a9a"><rect x="4.500" y="1.500" width="5" height="10" /><path d="M1.500 9 V13.500 H12.500 V9 M7 13.500 V16.500 M4 16.500 H10" /></svg>
          </div>
          <TaskCell>
            <svg width="20" height="14" fill="none" stroke="#fff" strokeWidth="1.200"><rect x="4.500" y="1" width="11" height="12" /><path d="M3 3 H.7 V11 H3 M17 3 H19.300 V11 H17" /></svg>
          </TaskCell>
          <div className="w-px" />
          <TaskCell line>
            <svg width="22" height="24" viewBox="0 0 22 24"><path d="M1 11 C2 4 7 1 11.500 1 C18 1 21 6 21 11 V14 H8 C8 18 11 19.500 14 19.500 C16.500 19.500 18.500 18.700 20 18 V22 C18 23 15.500 23.500 13 23.500 C7 23.500 3.500 20 3.500 15 C3.500 11 6 8.500 9 7.500 C8.200 8.500 8 9.500 8 10 H15 C15 7 13.500 5.500 10.500 5.500 C6 5.500 2.500 8 1 11 Z" fill="#0a7ada" /></svg>
          </TaskCell>
          <TaskCell>
            <svg width="22" height="24" viewBox="0 0 22 24"><path d="M6 7 C6 2 10 0 13 2 C15 3 15.500 5 15 6" fill="none" stroke="#ddd" strokeWidth="1.300" /><path d="M1 7 L21 5 V23.500 L3 21.500 Z" fill="#fff" /><path d="M5.500 10.500 L10 10 V14 H5.500 Z M11 10 L16 9.500 V14 H11 Z M5.500 15 H10 V19 L5.500 18.500 Z M11 15 H16 V19.500 L11 19 Z" fill="#111" /></svg>
          </TaskCell>
          <TaskCell>
            <svg width="24" height="24"><rect x=".5" y=".5" width="23" height="18" fill="#e8f4fa" /><rect x="2" y="2" width="20" height="7" fill="#17a6e0" /><rect x="2" y="9" width="20" height="8" fill="#0c6ea8" /><path d="M3 9.500 H21" stroke="#d8f0fa" strokeWidth="1.800" strokeDasharray="2.500 .6" /><path d="M9 19 H15 V21 L19 24 H5 L9 21 Z" fill="#eee" /></svg>
          </TaskCell>
          <TaskCell>
            <div className="flex h-6 w-6 flex-col items-center justify-center gap-px bg-[#333133] text-[6px] font-bold leading-[6px] tracking-[-0.300px] text-[#ddd]"><span>lenovo</span><span className="text-[#c22a3c]">Photos</span></div>
          </TaskCell>
          <TaskCell line="multi"><Chrome /></TaskCell>
          <TaskCell>
            <svg width="24" height="24" stroke="#82bc34" strokeWidth="2.200" strokeLinecap="round" fill="none"><path d="M2.500 9 V15 M5.500 6 V18 M8.700 8.500 V20 M8.700 4 V5 M12 2 V7 M12 17 V22 M15.300 3.500 V8 M15.300 16 V20 M18.500 6 V18 M21.500 9 V15" /><path d="M11 8.500 L15 12 L11 15.500" strokeWidth="1.800" /></svg>
          </TaskCell>
          <TaskCell>
            <svg width="16" height="22"><path d="M0 .5 H11 L15.500 5 V22 H0 Z" fill="#f6f6f6" /><path d="M11 .5 V5 H15.500 Z" fill="#999" /></svg>
          </TaskCell>
          <TaskCell line>
            <svg width="23" height="23"><rect width="23" height="23" rx="2" fill="#1668f4" /><path d="M5.500 16 V7.500 H17.500 V16 M11.500 16 V11" fill="none" stroke="#fff" strokeWidth="2.600" /></svg>
          </TaskCell>
          <TaskCell>
            <svg width="24" height="24" viewBox="-12 -12 24 24"><circle r="11" fill="#2a6ab4" /><path d="M-4 -10 Q4 -12 8 -5 L3 0 L-4 -3 Z" fill="#4ab0e4" /><path d="M-9 -8 L-6 -6 Q-2 -7 1 -4 L-3 -1 Q-3 4 2 4 Q7 4 6 -2 L9 -6 Q13 1 8 8 Q1 14 -7 9 Q-13 3 -9 -8 Z" fill="#ee7a1c" /><path d="M9 -6 Q12 2 7 7 Q10 1 9 -6 Z" fill="#fbd03b" /></svg>
          </TaskCell>
          <TaskCell line>
            <svg width="22" height="20"><path d="M0 1 H8 L10 3 H22 V19 H0 Z" fill="#f9d772" /><rect y="5" width="22" height="14" fill="#ffe79c" /><path d="M4 20 V11 H18 V20 H14.500 V15 H7.500 V20 Z" fill="#35aee8" /></svg>
          </TaskCell>
          <TaskCell line>
            <svg width="22" height="22" fill="none"><rect x="1" y="1" width="20" height="20" fill="#2a0606" stroke="#ee1c10" strokeWidth="1.800" /><path d="M6 17 C9 15 12 9 11 5.500 C10 4 9.500 7 11 10 C12.500 13 15 15 17 14.500 C18 13 13 12.500 9 14 C6 15 5 16.500 6 17 Z" stroke="#f4f4f4" strokeWidth="1.200" /></svg>
          </TaskCell>
          <TaskCell line>
            <svg width="22" height="22"><rect y="1" width="22" height="20" rx="2" fill="#d4d4d4" /><rect x="1.500" width="19" height="17" rx="1.500" fill="#4c4c4c" /><path d="M14.500 5 Q11 3.500 8.500 5 Q7 7 9 8 L13 9 Q15 10.500 13.500 12.500 Q11 14 7.500 12.500" fill="none" stroke="#f7931e" strokeWidth="2" /></svg>
          </TaskCell>
          <TaskCell line active><InkLogo s={23} dark /></TaskCell>
          <div className="ml-auto flex items-center">
            <svg width="12" height="8" fill="none" stroke="#fff" strokeWidth="1.300"><path d="M.7 7 L6 1.500 L11.300 7" /></svg>
            <svg width="23" height="14" className="ml-[18px]" fill="none" stroke="#fff"><rect x=".5" y=".5" width="22" height="12.500" /><path d="M3 3.500 H20 M3 6 H20" strokeDasharray="1.500 1" /><path d="M3 9.500 H5 M6.500 9.500 H16.500 M18 9.500 H20" /></svg>
            <div className="ml-[14px] flex w-[50px] flex-col items-center gap-[6px] whitespace-nowrap text-[12px] leading-[12px] tracking-[-0.350px] text-white"><span>4:59 PM</span><span>02/16/17</span></div>
            <svg width="26" height="26" className="ml-[17px]">
              <path d="M0 3 H16 V14.500 H10 L6 19 V14.500 H0 Z" fill="#fff" /><path d="M3 6 H13 M3 8.500 H13 M3 11 H10" stroke="#111" />
              <circle cx="15.500" cy="17.500" r="8" fill="#333" stroke="#777" />
              <text x="12.200" y="21.500" className="font-['Noto_Sans'] text-[11.500px] font-bold" fill="#fff">2</text>
            </svg>
            <div className="ml-[12px] mr-[3px] h-10 w-px bg-[#444]" />
          </div>
        </div>
      </div>
    </div>
  );
}
